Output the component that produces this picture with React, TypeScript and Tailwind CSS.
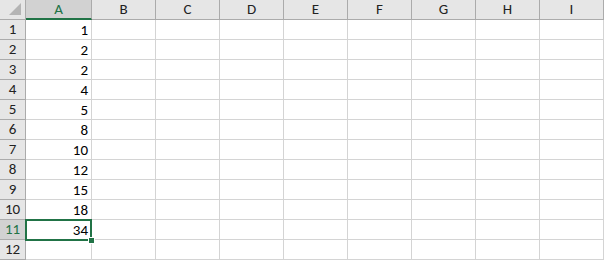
const cols = ["A", "B", "C", "D", "E", "F", "G", "H", "I"];
const values = [1, 2, 2, 4, 5, 8, 10, 12, 15, 18, 34, null];

const App = () => {
  return (
    <div
      className="relative w-[604px] h-[261px] overflow-hidden bg-white text-black"
      style={{ fontFamily: "Calibri, Carlito, 'Liberation Sans', sans-serif" }}
    >
      {/* column headers */}
      <div className="flex h-[20px]">
        <div className="relative w-[26px] h-[20px] bg-[#e6e6e6] border-r border-b border-[#ababab]">
          <svg width="14" height="14" className="absolute right-[3px] bottom-[3px]">
            <polygon points="13,1 13,13 1,13" fill="#b4b4b4" />
          </svg>
        </div>
        {cols.map((c, i) => (
          <div
            key={c}
            className={
              i === 0
                ? "w-[66px] h-[20px] flex items-center justify-center text-[15px] bg-[#d2d2d2] text-[#217346] border-r border-[#ababab] border-b-2 border-b-[#217346]"
                : "w-[64px] h-[20px] flex items-center justify-center text-[15px] bg-[#e6e6e6] text-[#222] border-r border-b border-[#ababab]"
            }
          >
            {c}
          </div>
        ))}
      </div>

      {/* rows */}
      {values.map((v, r) => (
        <div key={r} className="flex h-[20px]">
          <div
            className={
              r === 10
                ? "w-[26px] h-[20px] flex items-center justify-center text-[15px] bg-[#d2d2d2] text-[#217346] border-r border-b border-[#ababab]"
                : "w-[26px] h-[20px] flex items-center justify-center text-[15px] bg-[#e6e6e6] text-[#222] border-r border-b border-[#ababab]"
            }
          >
            {r + 1}
          </div>
          {cols.map((c, i) => (
            <div
              key={c}
              className={
                (i === 0 ? "w-[66px]" : "w-[64px]") +
                " h-[20px] border-r border-b border-[#d4d4d4] flex items-end justify-end pr-[3px] text-[15px] leading-[18px]"
              }
            >
              {i === 0 && v !== null ? v : ""}
            </div>
          ))}
        </div>
      ))}

      {/* selection on A11 */}
      <div className="absolute left-[25px] top-[219px] w-[67px] h-[22px] border-2 border-[#217346] pointer-events-none" />
      <div className="absolute left-[88px] top-[237px] w-[7px] h-[7px] bg-[#217346] border border-white" />
    </div>
  );
};

export default App;
